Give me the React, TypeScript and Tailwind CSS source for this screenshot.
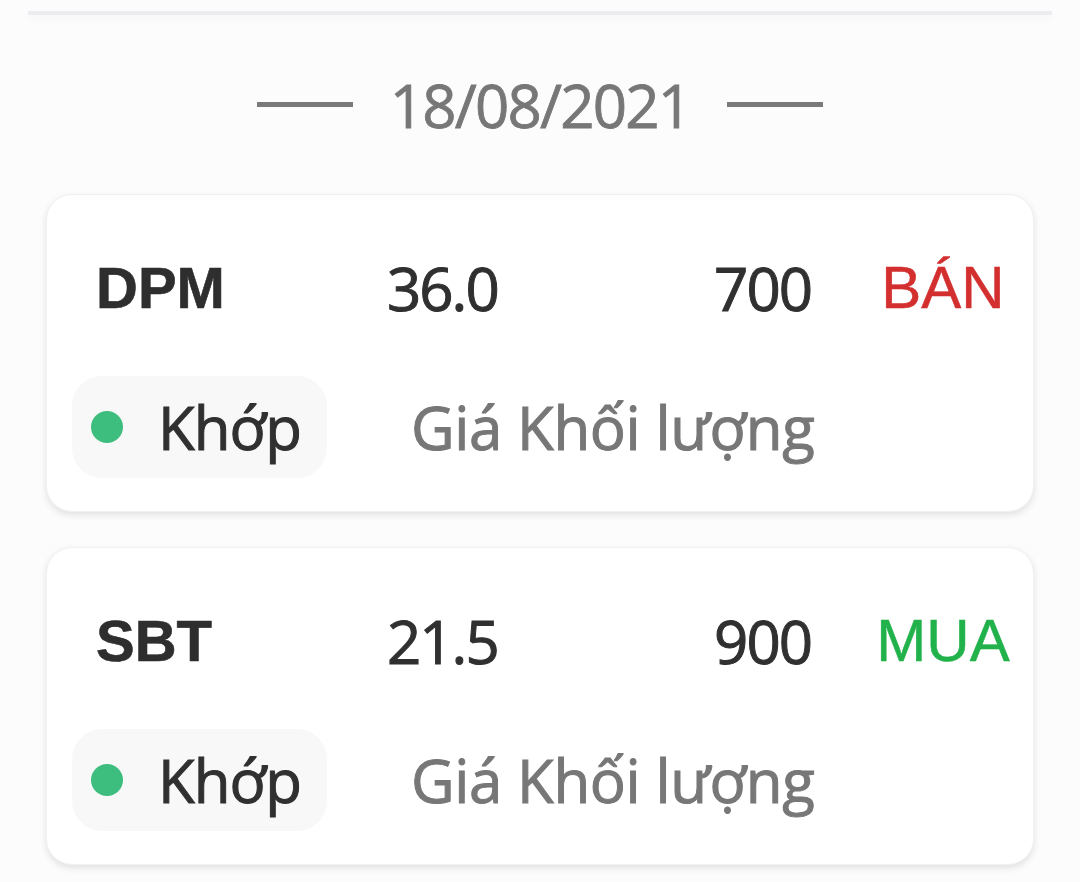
import React from "react";

type Order = {
  code: string;
  price: string;
  qty: string;
  side: "BÁN" | "MUA";
};

const orders: Order[] = [
  { code: "DPM", price: "36.0", qty: "700", side: "BÁN" },
  { code: "SBT", price: "21.5", qty: "900", side: "MUA" },
];

function OrderCard({ o }: { o: Order }) {
  return (
    <div className="bg-white rounded-[26px] shadow-[0_3px_7px_rgba(0,0,0,0.11)] border border-[#f1f1f1] h-[318px] flex flex-col">
      <div className="mt-[43px] h-[100px] flex items-center">
        <div className="w-[338px] pl-[49px] font-['Liberation_Sans',Arial,sans-serif] font-bold text-[58px] leading-none text-[#2e2e2e] [-webkit-text-stroke:0.6px_currentColor]">
          {o.code}
        </div>
        <div className="w-[216px] pl-[2px] font-['Open_Sans',sans-serif] text-[60px] tracking-[-2px] leading-none text-[#303030] [-webkit-text-stroke:1px_currentColor]">
          {o.price}
        </div>
        <div className="w-[210px] text-right font-['Open_Sans',sans-serif] text-[60px] tracking-[-2px] leading-none text-[#303030] [-webkit-text-stroke:1px_currentColor]">
          {o.qty}
        </div>
        <div className="w-[42px]" />
        <div
          className={
            o.side === "BÁN"
              ? "flex-1 text-center font-['Liberation_Sans',Arial,sans-serif] text-[60px] leading-none text-[#d32f2f] [-webkit-text-stroke:0.5px_currentColor]"
              : "flex-1 text-center font-['Liberation_Sans',Arial,sans-serif] text-[60px] leading-none text-[#21b24b] [-webkit-text-stroke:0.5px_currentColor]"
          }
        >
          {o.side}
        </div>
      </div>
      <div className="mt-[38px] h-[102px] flex items-center pl-[25px]">
        <div className="w-[255px] h-[102px] rounded-[30px] bg-[#f8f8f8] flex items-center pl-[19px]">
          <span className="w-[32px] h-[32px] rounded-full bg-[#3dbd7e]" />
          <span className="ml-[35px] font-['Open_Sans',sans-serif] text-[60px] tracking-[-1px] leading-none text-[#303030] [-webkit-text-stroke:1px_currentColor]">
            Khớp
          </span>
        </div>
        <div className="ml-[84px] font-['Open_Sans',sans-serif] text-[60px] tracking-[-0.4px] leading-none text-[#777777] [-webkit-text-stroke:1px_currentColor]">
          Giá Khối lượng
        </div>
      </div>
    </div>
  );
}

export default function App() {
  return (
    <div className="w-[1080px] h-[882px] bg-[#fcfcfc] overflow-hidden flex flex-col">
      <div className="mt-[11px] mx-[28px] h-[4px] bg-[#ececf0] shadow-[0_4px_8px_rgba(0,0,0,0.04)]" />
      <div className="h-[179px] flex items-center justify-center">
        <div className="w-[96px] h-[5px] bg-[#7a7a7a]" />
        <div className="mx-[37px] font-['Open_Sans',sans-serif] text-[60px] tracking-[-1.8px] leading-none text-[#777777] [-webkit-text-stroke:0.8px_currentColor]">
          18/08/2021
        </div>
        <div className="w-[96px] h-[5px] bg-[#7a7a7a]" />
      </div>
      <div className="mx-[46px] flex flex-col gap-[35px]">
        {orders.map((o) => (
          <OrderCard key={o.code} o={o} />
        ))}
      </div>
    </div>
  );
}
